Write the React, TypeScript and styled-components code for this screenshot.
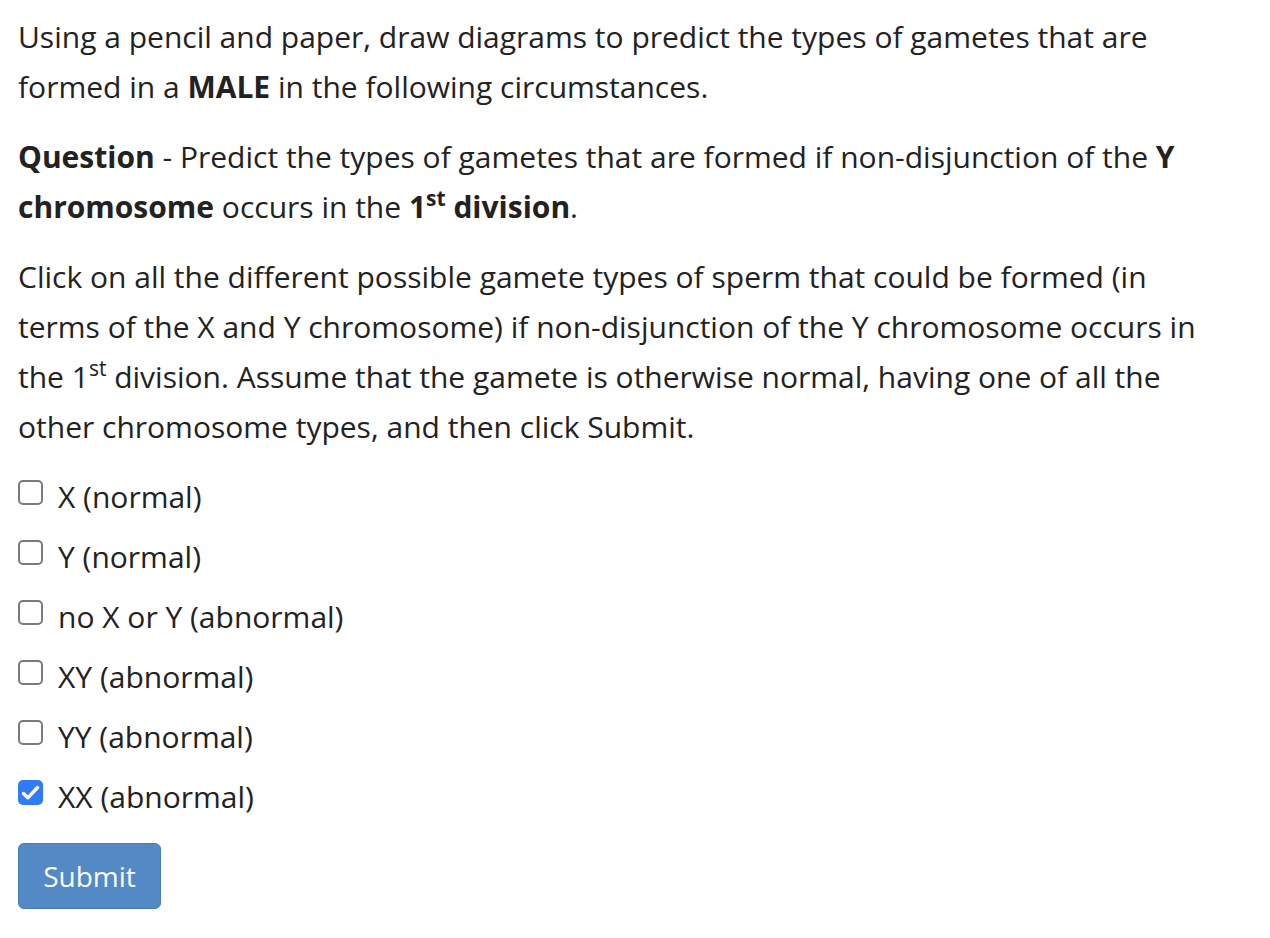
import React, { useState } from "react";
import styled, { createGlobalStyle } from "styled-components";

const Global = createGlobalStyle`
  html, body { margin: 0; padding: 0; background: #fff; }
  body { font-family: "Open Sans", "Noto Sans", sans-serif; color: #222; }
`;

const Page = styled.div`
  padding: 12px 18px 0 18px;
  max-width: 1200px;
  font-size: 30px;
  line-height: 50px;
`;

const Para = styled.p`
  margin: 0 0 20px 0;
`;

const Sup = styled.sup`
  font-size: 0.7em;
  line-height: 0;
  vertical-align: 0.55em;
`;

const Options = styled.div`
  display: flex;
  flex-direction: column;
  gap: 10px;
`;

const Row = styled.label`
  display: flex;
  align-items: flex-start;
  height: 50px;
  cursor: pointer;
`;

const Box = styled.span<{ $checked: boolean }>`
  position: relative;
  box-sizing: border-box;
  width: 25px;
  height: 25px;
  margin-top: 8px;
  margin-right: 15px;
  flex: 0 0 auto;
  border-radius: 5px;
  border: ${(p) => (p.$checked ? "none" : "2px solid #7a7a7a")};
  background: ${(p) => (p.$checked ? "#2f7cf6" : "#fff")};
  display: flex;
  align-items: center;
  justify-content: center;
`;

const HiddenInput = styled.input`
  position: absolute;
  opacity: 0;
  width: 0;
  height: 0;
`;

const SubmitButton = styled.button`
  margin-top: 21px;
  height: 66px;
  width: 143px;
  box-sizing: border-box;
  background: #5389c5;
  border: 1px solid #4a7db8;
  border-radius: 6px;
  color: #fff;
  font-family: "Open Sans", "Noto Sans", sans-serif;
  font-size: 28px;
  line-height: 1;
  padding: 0;
  cursor: pointer;
`;

const options = [
  "X (normal)",
  "Y (normal)",
  "no X or Y (abnormal)",
  "XY (abnormal)",
  "YY (abnormal)",
  "XX (abnormal)",
];

export default function App() {
  const [checked, setChecked] = useState<boolean[]>([false, false, false, false, false, true]);
  return (
    <>
      <Global />
      <Page>
        <Para>
          Using a pencil and paper, draw diagrams to predict the types of gametes that are formed in a{" "}
          <b>MALE</b> in the following circumstances.
        </Para>
        <Para>
          <b>Question</b> - Predict the types of gametes that are formed if non-disjunction of the{" "}
          <b>Y chromosome</b> occurs in the{" "}
          <b>
            1<Sup>st</Sup> division
          </b>
          .
        </Para>
        <Para>
          Click on all the different possible gamete types of sperm that could be formed (in terms of the X
          and Y chromosome) if non-disjunction of the Y chromosome occurs in the 1<Sup>st</Sup> division.
          Assume that the gamete is otherwise normal, having one of all the other chromosome types, and then
          click Submit.
        </Para>
        <Options>
          {options.map((o, i) => (
            <Row key={o}>
              <HiddenInput
                type="checkbox"
                checked={checked[i]}
                onChange={() => setChecked((c) => c.map((v, j) => (j === i ? !v : v)))}
              />
              <Box $checked={checked[i]}>
                {checked[i] && (
                  <svg width="25" height="25" viewBox="0 0 25 25">
                    <path d="M5.5 13.5 L9.8 17.8 L19.5 7.5" fill="none" stroke="#fff" strokeWidth="3.4" strokeLinecap="round" strokeLinejoin="round" />
                  </svg>
                )}
              </Box>
              <span>{o}</span>
            </Row>
          ))}
        </Options>
        <SubmitButton>Submit</SubmitButton>
      </Page>
    </>
  );
}
